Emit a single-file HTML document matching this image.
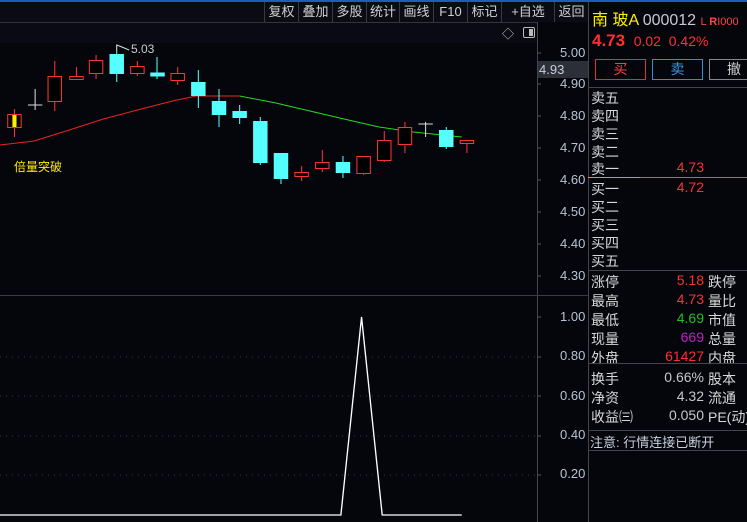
<!DOCTYPE html>
<html><head><meta charset="utf-8"><style>
*{margin:0;padding:0;box-sizing:border-box}
body{width:747px;height:522px;background:#05050c;overflow:hidden;position:relative;font-family:"Liberation Sans","Noto Sans CJK SC",sans-serif;color:#c8c8c8}
.a{position:absolute;white-space:nowrap}
.tb{position:absolute;top:2px;height:20px;font-size:13px;color:#d0d0d0;line-height:20px;text-align:center;border-left:1px solid #3a3a44}
.ax{position:absolute;left:560px;font-size:13px;color:#b8c4d4}
.rp{position:absolute;left:591px;font-size:14px;color:#d8d8d8}
.hl{position:absolute;left:588px;width:159px;height:1px;background:#44444c}
</style></head><body>
<div class="a" style="left:0;top:0;width:747px;height:2px;background:#1a5fc0"></div>
<div class="a" style="left:0;top:2px;width:588px;height:20px;background:#0b0b16"></div>
<div class="a" style="left:0;top:22px;width:537px;height:21px;background:#0a0a14;border-top:1px solid #34343c"></div>
<div class="tb" style="left:264px;width:34px">复权</div>
<div class="tb" style="left:298px;width:34px">叠加</div>
<div class="tb" style="left:332px;width:34px">多股</div>
<div class="tb" style="left:366px;width:33px">统计</div>
<div class="tb" style="left:399px;width:34px">画线</div>
<div class="tb" style="left:433px;width:34px">F10</div>
<div class="tb" style="left:467px;width:34px">标记</div>
<div class="tb" style="left:501px;width:53px">+自选</div>
<div class="tb" style="left:554px;width:34px">返回</div>
<div class="a" style="left:502px;top:25px;font-size:12px;color:#ccc">◇</div>
<div class="a" style="left:523px;top:27px;width:12px;height:11px;border:1px solid #bbb;border-radius:2px"><div style="position:absolute;right:1px;top:1px;width:4px;height:7px;background:#bbb"></div></div>
<div class="a" style="left:537px;top:22px;width:1px;height:500px;background:#44444c"></div>
<div class="a" style="left:588px;top:2px;width:1px;height:520px;background:#44444c"></div>
<div class="a" style="left:0;top:295px;width:588px;height:1px;background:#3a3a44"></div>
<svg class="a" style="left:0;top:0" width="537" height="522">
<g stroke="#3a3a44" stroke-dasharray="1,5">
<line x1="0" y1="357" x2="537" y2="357"/><line x1="0" y1="396" x2="537" y2="396"/><line x1="0" y1="436" x2="537" y2="436"/><line x1="0" y1="475" x2="537" y2="475"/>
</g>
<g transform="scale(1.033 1)">
<polyline fill="none" stroke="#ee2222" stroke-width="1" points="0,145 33,141 67,130 100,119 133,110 167,101 190,96 232,96"/>
<polyline fill="none" stroke="#22dd22" stroke-width="1" points="232,96 267,103 300,111 333,119 367,127 400,132 447,137"/>
<g stroke="#ff3333" fill="#000">
<line x1="14" y1="109" x2="14" y2="137"/><rect x="7.5" y="114.5" width="13" height="13"/>
<line x1="53" y1="61" x2="53" y2="111"/><rect x="46.5" y="76.5" width="13" height="25"/>
<line x1="74" y1="67" x2="74" y2="80"/><rect x="67.5" y="76.5" width="13" height="3"/>
<line x1="93" y1="55" x2="93" y2="79"/><rect x="86.5" y="60.5" width="13" height="13"/>
<line x1="133" y1="61" x2="133" y2="76"/><rect x="126.5" y="66.5" width="13" height="7"/>
<line x1="172" y1="67" x2="172" y2="85"/><rect x="165.5" y="73.5" width="13" height="7"/>
<line x1="292" y1="166" x2="292" y2="181"/><rect x="285.5" y="172.5" width="13" height="4"/>
<line x1="312" y1="150" x2="312" y2="172"/><rect x="305.5" y="162.5" width="13" height="6"/>
<line x1="352" y1="156" x2="352" y2="175"/><rect x="345.5" y="156.5" width="13" height="17"/>
<line x1="372" y1="131" x2="372" y2="162"/><rect x="365.5" y="140.5" width="13" height="20"/>
<line x1="392" y1="122" x2="392" y2="153"/><rect x="385.5" y="127.5" width="13" height="17"/>
<line x1="452" y1="140" x2="452" y2="153"/><rect x="445.5" y="140.5" width="13" height="3"/>
</g>
<rect x="12" y="115" width="4" height="12" fill="#ffee00"/>
<g stroke="#5ff" fill="#5ff">
<line x1="113" y1="51" x2="113" y2="82"/><rect x="106.5" y="54.5" width="13" height="19"/>
<line x1="152" y1="57" x2="152" y2="79"/><rect x="146" y="73" width="13" height="3"/>
<line x1="192" y1="70" x2="192" y2="108"/><rect x="185.5" y="82.5" width="13" height="13"/>
<line x1="212" y1="89" x2="212" y2="127"/><rect x="205.5" y="101.5" width="13" height="13"/>
<line x1="232" y1="105" x2="232" y2="124"/><rect x="225.5" y="111.5" width="13" height="6"/>
<line x1="252" y1="117" x2="252" y2="165"/><rect x="245.5" y="121.5" width="13" height="41"/>
<line x1="272" y1="153" x2="272" y2="184"/><rect x="265.5" y="153.5" width="13" height="25"/>
<line x1="332" y1="156" x2="332" y2="178"/><rect x="325.5" y="162.5" width="13" height="10"/>
<line x1="432" y1="127" x2="432" y2="149"/><rect x="425.5" y="130.5" width="13" height="16"/>
</g>
<g stroke="#ddd">
<line x1="34" y1="89" x2="34" y2="110"/><line x1="27" y1="105" x2="41" y2="105"/>
<line x1="412" y1="122" x2="412" y2="137"/><line x1="405" y1="124" x2="419" y2="124"/>
<polyline fill="none" points="113,51 113,45 118,47 125,50"/>
</g>
<polyline fill="none" stroke="#fff" stroke-width="1.3" points="0,515 330,515 350,317 370,515 447,515"/>
</g>
<text x="131" y="53" fill="#ccc" font-size="12" font-family="Liberation Sans">5.03</text>
<text x="14" y="171" fill="#ffee00" font-size="12" font-family="Liberation Sans, Noto Sans CJK SC, sans-serif">倍量突破</text>
</svg>
<svg class="a" style="left:537px;top:0" width="51" height="522"><g stroke="#555"><line x1="0" y1="53" x2="4" y2="53"/><line x1="0" y1="84" x2="4" y2="84"/><line x1="0" y1="116" x2="4" y2="116"/><line x1="0" y1="148" x2="4" y2="148"/><line x1="0" y1="180" x2="4" y2="180"/><line x1="0" y1="212" x2="4" y2="212"/><line x1="0" y1="244" x2="4" y2="244"/><line x1="0" y1="276" x2="4" y2="276"/><line x1="0" y1="317" x2="4" y2="317"/><line x1="0" y1="357" x2="4" y2="357"/><line x1="0" y1="396" x2="4" y2="396"/><line x1="0" y1="436" x2="4" y2="436"/><line x1="0" y1="475" x2="4" y2="475"/></g></svg>
<div class="ax" style="top:45px">5.00</div>
<div class="ax" style="top:76px">4.90</div>
<div class="ax" style="top:108px">4.80</div>
<div class="ax" style="top:140px">4.70</div>
<div class="ax" style="top:172px">4.60</div>
<div class="ax" style="top:204px">4.50</div>
<div class="ax" style="top:236px">4.40</div>
<div class="ax" style="top:268px">4.30</div>
<div class="ax" style="top:309px">1.00</div>
<div class="ax" style="top:348px">0.80</div>
<div class="ax" style="top:388px">0.60</div>
<div class="ax" style="top:427px">0.40</div>
<div class="ax" style="top:466px">0.20</div>
<div class="a" style="left:538px;top:61px;width:50px;height:17px;background:#2c2f38;color:#c8d0dc;font-size:13px;line-height:17px;padding-left:1px">4.93</div>
<div class="a" style="left:592px;top:6px;font-size:16px;color:#ffee00">南 玻A <span style="color:#c8c8d0">000012</span> <span style="color:#ff4444;font-size:11px">L <b>R</b>I000</span></div>
<div class="a" style="left:592px;top:31px;font-size:17px;color:#ff3030"><b>4.73</b> <span style="font-size:14px">&nbsp;0.02 &nbsp;0.42%</span></div>
<div class="a" style="left:595px;top:59px;width:51px;height:21px;border:1px solid #e03030;color:#ff4040;font-size:14px;text-align:center;line-height:19px">买</div>
<div class="a" style="left:652px;top:59px;width:51px;height:21px;border:1px solid #3a8ad8;color:#3a9ae8;font-size:14px;text-align:center;line-height:19px">卖</div>
<div class="a" style="left:709px;top:59px;width:45px;height:21px;border:1px solid #888;color:#ccc;font-size:14px;text-align:left;padding-left:17px;line-height:19px">撤</div>
<div class="hl" style="top:87px"></div>
<div class="rp" style="top:88px">卖五</div>
<div class="rp" style="top:106px">卖四</div>
<div class="rp" style="top:124px">卖三</div>
<div class="rp" style="top:142px">卖二</div>
<div class="rp" style="top:159px">卖一</div>
<div class="a" style="left:621px;top:159px;width:83px;text-align:right;font-size:14px;color:#ff3030">4.73</div>
<div class="a" style="left:588px;top:177px;width:52px;height:1px;background:#d89a30"></div>
<div class="a" style="left:640px;top:177px;width:107px;height:1px;background:#4a88c8"></div>
<div class="rp" style="top:179px">买一</div>
<div class="a" style="left:621px;top:179px;width:83px;text-align:right;font-size:14px;color:#ff3030">4.72</div>
<div class="rp" style="top:197px">买二</div>
<div class="rp" style="top:215px">买三</div>
<div class="rp" style="top:233px">买四</div>
<div class="rp" style="top:251px">买五</div>
<div class="hl" style="top:270px"></div>
<div class="rp" style="top:272px">涨停</div><div class="a" style="left:621px;top:272px;width:83px;text-align:right;font-size:14px;color:#ff3030">5.18</div><div class="a" style="left:708px;top:272px;font-size:14px;color:#d8d8d8">跌停</div>
<div class="rp" style="top:291px">最高</div><div class="a" style="left:621px;top:291px;width:83px;text-align:right;font-size:14px;color:#ff3030">4.73</div><div class="a" style="left:708px;top:291px;font-size:14px;color:#d8d8d8">量比</div>
<div class="rp" style="top:310px">最低</div><div class="a" style="left:621px;top:310px;width:83px;text-align:right;font-size:14px;color:#20c020">4.69</div><div class="a" style="left:708px;top:310px;font-size:14px;color:#d8d8d8">市值</div>
<div class="rp" style="top:329px">现量</div><div class="a" style="left:621px;top:329px;width:83px;text-align:right;font-size:14px;color:#c020c0">669</div><div class="a" style="left:708px;top:329px;font-size:14px;color:#d8d8d8">总量</div>
<div class="rp" style="top:348px">外盘</div><div class="a" style="left:621px;top:348px;width:83px;text-align:right;font-size:14px;color:#ff3030">61427</div><div class="a" style="left:708px;top:348px;font-size:14px;color:#d8d8d8">内盘</div>
<div class="hl" style="top:363px"></div>
<div class="rp" style="top:369px">换手</div><div class="a" style="left:621px;top:369px;width:83px;text-align:right;font-size:14px;color:#c8c8c8">0.66%</div><div class="a" style="left:708px;top:369px;font-size:14px;color:#d8d8d8">股本</div>
<div class="rp" style="top:388px">净资</div><div class="a" style="left:621px;top:388px;width:83px;text-align:right;font-size:14px;color:#c8c8c8">4.32</div><div class="a" style="left:708px;top:388px;font-size:14px;color:#d8d8d8">流通</div>
<div class="rp" style="top:407px">收益㈢</div><div class="a" style="left:621px;top:407px;width:83px;text-align:right;font-size:14px;color:#c8c8c8">0.050</div><div class="a" style="left:708px;top:407px;font-size:14px;color:#d8d8d8">PE(动)</div>
<div class="hl" style="top:430px"></div>
<div class="a" style="left:590px;top:432px;font-size:13px;color:#c8d0dc">注意: 行情连接已断开</div>
<div class="hl" style="top:450px"></div>
</body></html>
